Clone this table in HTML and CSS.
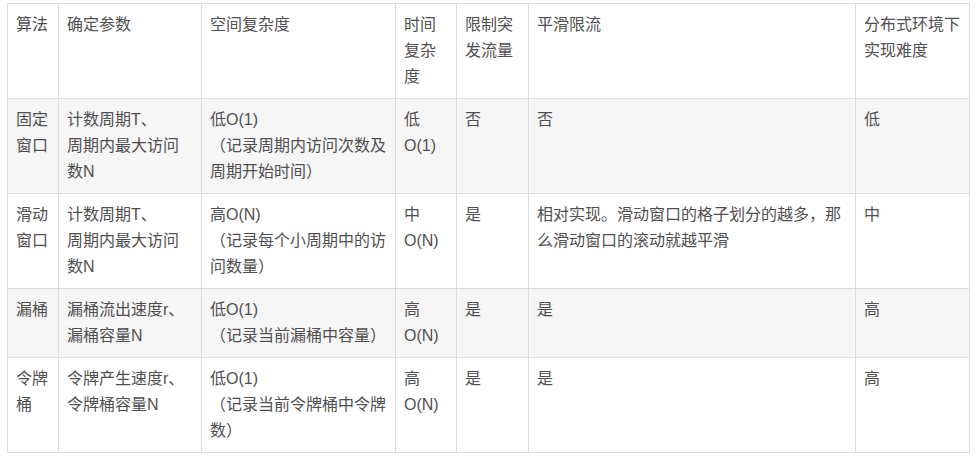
FILE: index.html
```html
<!DOCTYPE html>
<html lang="zh-CN">
<head>
<meta charset="utf-8">
<link rel="stylesheet" href="styles.css">
</head>
<body>
<table class="cmp">
  <colgroup>
    <col class="c1"><col class="c2"><col class="c3"><col class="c4"><col class="c5"><col class="c6"><col class="c7">
  </colgroup>
  <thead>
    <tr>
      <th>算法</th>
      <th>确定参数</th>
      <th>空间复杂度</th>
      <th>时间复杂度</th>
      <th>限制突发流量</th>
      <th>平滑限流</th>
      <th>分布式环境下实现难度</th>
    </tr>
  </thead>
  <tbody>
    <tr class="alt">
      <td>固定窗口</td>
      <td>计数周期T、<br>周期内最大访问数N</td>
      <td>低O(1)<br>（记录周期内访问次数及周期开始时间）</td>
      <td>低<br>O(1)</td>
      <td>否</td>
      <td>否</td>
      <td>低</td>
    </tr>
    <tr>
      <td>滑动窗口</td>
      <td>计数周期T、<br>周期内最大访问数N</td>
      <td>高O(N)<br>（记录每个小周期中的访问数量）</td>
      <td>中<br>O(N)</td>
      <td>是</td>
      <td>相对实现。滑动窗口的格子划分的越多，那么滑动窗口的滚动就越平滑</td>
      <td>中</td>
    </tr>
    <tr class="alt">
      <td>漏桶</td>
      <td>漏桶流出速度r、<br>漏桶容量N</td>
      <td>低O(1)<br>（记录当前漏桶中容量）</td>
      <td>高<br>O(N)</td>
      <td>是</td>
      <td>是</td>
      <td>高</td>
    </tr>
    <tr>
      <td>令牌桶</td>
      <td>令牌产生速度r、<br>令牌桶容量N</td>
      <td>低O(1)<br>（记录当前令牌桶中令牌数）</td>
      <td>高<br>O(N)</td>
      <td>是</td>
      <td>是</td>
      <td>高</td>
    </tr>
  </tbody>
</table>
</body>
</html>
```
FILE: styles.css
```css
html, body {
  margin: 0;
  padding: 0;
  background: #ffffff;
}

body {
  padding: 3px 0 0 7px;
  font-family: "Liberation Sans", "Noto Sans CJK SC", sans-serif;
  font-size: 16px;
  color: #4f4f4f;
}

.cmp {
  border-collapse: collapse;
  table-layout: fixed;
  width: 962px;
  text-spacing-trim: space-all;
}

.c1 { width: 51px; }
.c2 { width: 143px; }
.c3 { width: 194px; }
.c4 { width: 61px; }
.c5 { width: 72px; }
.c6 { width: 327px; }
.c7 { width: 114px; }

.cmp th,
.cmp td {
  border: 1px solid #dddddd;
  padding: 8px;
  line-height: 26px;
  text-align: left;
  vertical-align: top;
  font-weight: normal;
  word-break: break-all;
}

.cmp tr.alt td {
  background: #f6f6f6;
}
```
